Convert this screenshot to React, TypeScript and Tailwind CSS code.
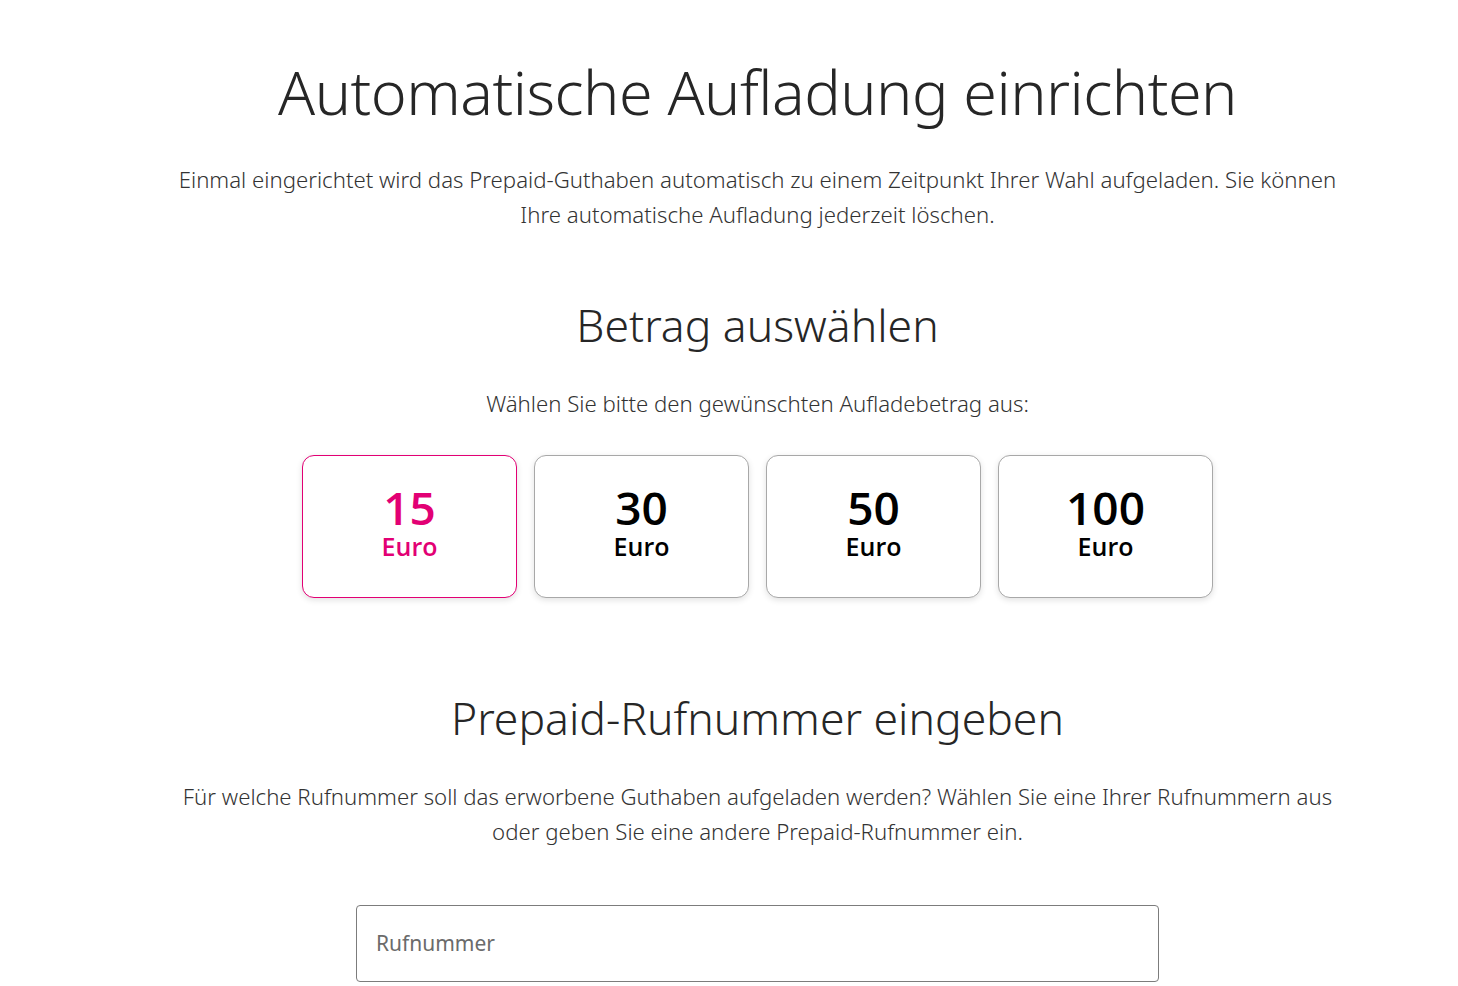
import React from "react";

const amounts = ["15", "30", "50", "100"];

export default function App() {
  return (
    <div className="min-h-[986px] w-full bg-white pl-[57px] text-[#262626]" style={{ fontFamily: '"Noto Sans", sans-serif' }}>
      <div className="flex flex-col items-center">
        <h1 className="mt-[49px] text-[61px] font-light leading-[86px] tracking-[-0.5px]">Automatische Aufladung einrichten</h1>
        <p className="mt-[27px] max-w-[1175px] text-center text-[22.2px] font-light leading-[35px] text-[#333]">
          Einmal eingerichtet wird das Prepaid-Guthaben automatisch zu einem Zeitpunkt Ihrer Wahl aufgeladen. Sie können Ihre automatische Aufladung jederzeit löschen.
        </p>
        <h2 className="mt-[63px] text-[44.5px] font-light leading-[60px]">Betrag auswählen</h2>
        <p className="mt-[31px] text-[22.2px] font-light leading-[35px] text-[#333]">Wählen Sie bitte den gewünschten Aufladebetrag aus:</p>
        <div className="mt-[34px] flex gap-[17px]">
          {amounts.map((a, i) => (
            <div
              key={a}
              className={`flex h-[143px] w-[215px] flex-col items-center justify-center rounded-[12px] border bg-white pb-[8px] shadow-[0_2px_6px_rgba(0,0,0,0.12)] ${
                i === 0 ? "border-[#e20074] text-[#e20074]" : "border-[#a8a8a8] text-black"
              }`}
              style={{ fontFamily: '"Open Sans", sans-serif' }}
            >
              <span className="text-[46px] font-semibold leading-[44px]">{a}</span>
              <span className="mt-[2px] text-[25px] font-semibold leading-[30px]">Euro</span>
            </div>
          ))}
        </div>
        <h2 className="mt-[90px] text-[44.5px] font-light leading-[60px]">Prepaid-Rufnummer eingeben</h2>
        <p className="mt-[31px] max-w-[1175px] text-center text-[22.2px] font-light leading-[35px] text-[#333]">
          Für welche Rufnummer soll das erworbene Guthaben aufgeladen werden? Wählen Sie eine Ihrer Rufnummern aus oder geben Sie eine andere Prepaid-Rufnummer ein.
        </p>
        <div className="mt-[56px] flex h-[77px] w-[803px] items-center rounded-[4px] border border-[#7c7c7c] px-[19px]">
          <span className="text-[21px] font-normal text-[#6b6b6b]">Rufnummer</span>
        </div>
      </div>
    </div>
  );
}
